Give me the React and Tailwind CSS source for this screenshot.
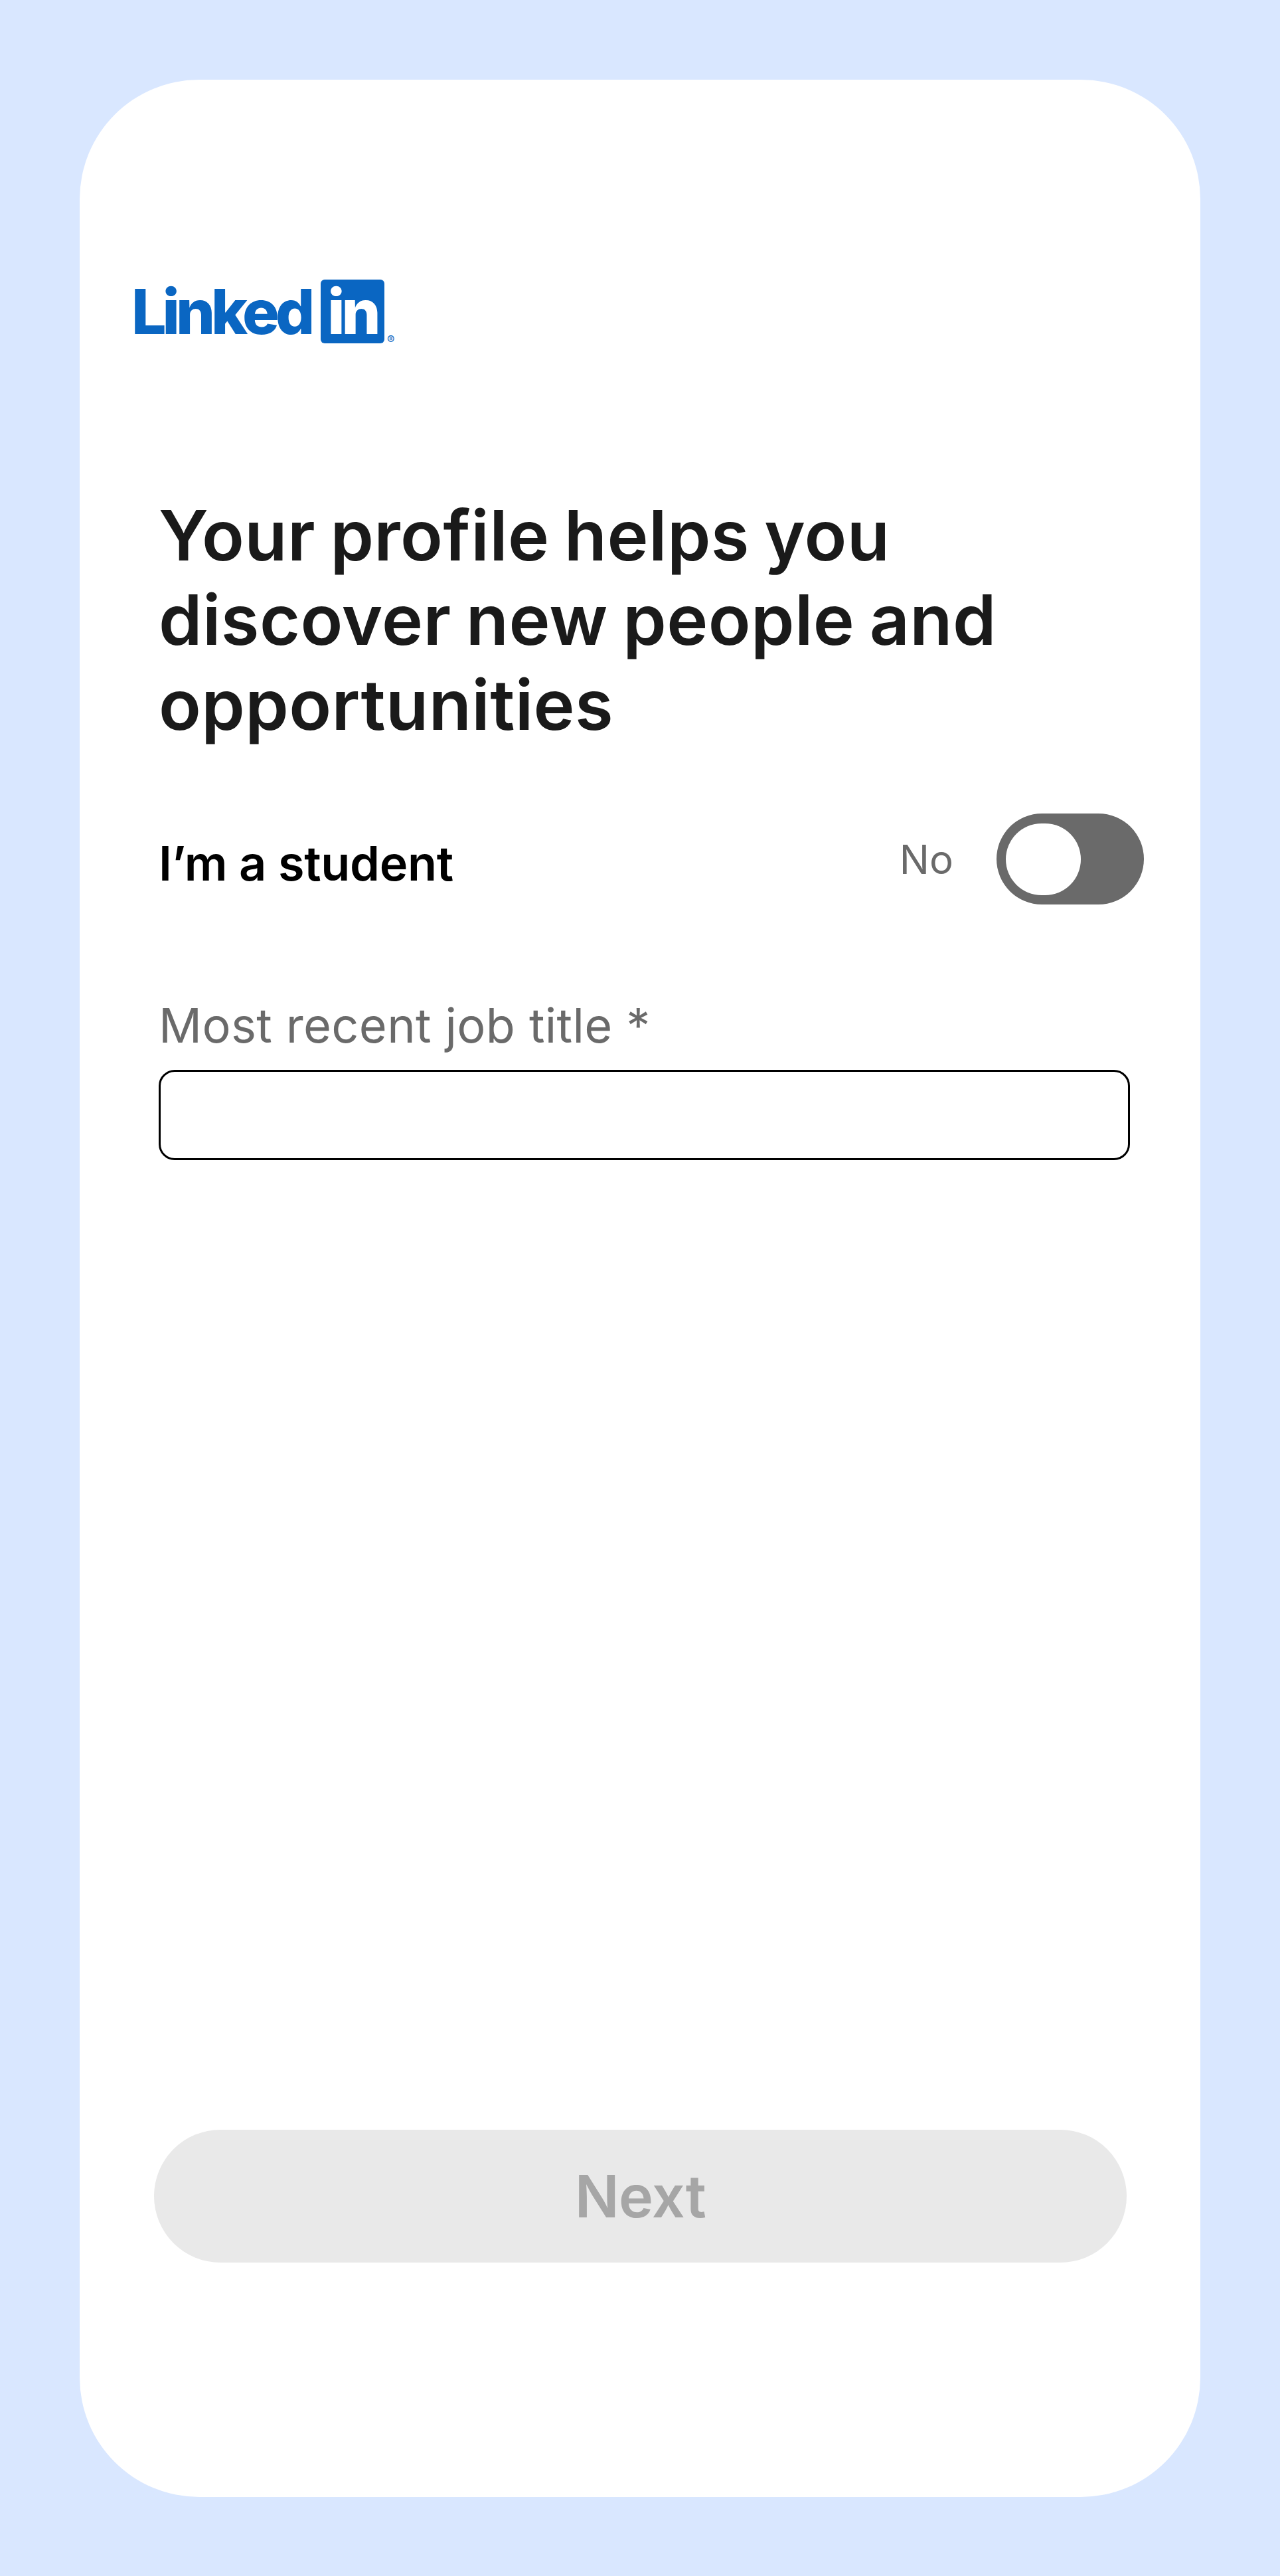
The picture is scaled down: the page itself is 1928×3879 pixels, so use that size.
const inter = "font-['Inter',sans-serif]";

function LinkedInLogo() {
  return (
    <div className="ml-[78px] flex h-[96px] items-start">
      <span className={`${inter} w-[285px] text-[93px] leading-[96px] font-extrabold tracking-[-6px] text-[#0a66c2]`}>
        Linked
      </span>
      <span className={`${inter} flex h-[96px] w-[96px] items-center justify-center rounded-[6px] bg-[#0a66c2] text-[93px] leading-[96px] font-extrabold tracking-[-5px] text-white`}>
        in
      </span>
      <span className={`${inter} mt-[82px] ml-[4px] text-[17px] leading-[18px] text-[#0a66c2]`}>®</span>
    </div>
  );
}

function Toggle() {
  return (
    <div className="flex h-[137px] w-[222px] items-center rounded-full bg-[#6a6a6a] pl-[14px]">
      <div className="h-[108px] w-[113px] rounded-full bg-white" />
    </div>
  );
}

export default function App() {
  return (
    <div className={`${inter} min-h-[3879px] bg-[#d9e7ff] p-[120px]`}>
      <div className="flex h-[3640px] flex-col rounded-[180px] bg-white pt-[301px]">
        <LinkedInLogo />

        <h1 className="mt-[225px] ml-[119px] w-[1400px] text-[105px] leading-[127.4px] font-semibold tracking-[0.4px] text-[#1a1a1a] [word-spacing:-4.5px]">
          Your profile helps you discover new people and opportunities
        </h1>

        <div className="mt-[101px] mr-[85px] ml-[119px] flex h-[137px] items-center justify-between">
          <span className="pt-[13px] text-[72px] font-semibold tracking-[-0.3px] text-black">I’m a student</span>
          <div className="flex items-center gap-[65px]">
            <span className="text-[60px] text-[#6a6a6a]">No</span>
            <Toggle />
          </div>
        </div>

        <label className="mt-[138px] ml-[119px] text-[72px] leading-[87px] tracking-[0.35px] text-[#6a6a6a]">
          Most recent job title *
        </label>
        <div className="mt-[24px] mr-[106px] ml-[119px] h-[136px] rounded-[24px] border-[3px] border-black" />

        <button
          type="button"
          className="mt-auto mr-[111px] mb-[353px] ml-[112px] h-[200px] rounded-full bg-[#e9e9e9] text-[88px] font-semibold tracking-[-0.5px] text-[#a6a6a6]"
        >
          Next
        </button>
      </div>
    </div>
  );
}
